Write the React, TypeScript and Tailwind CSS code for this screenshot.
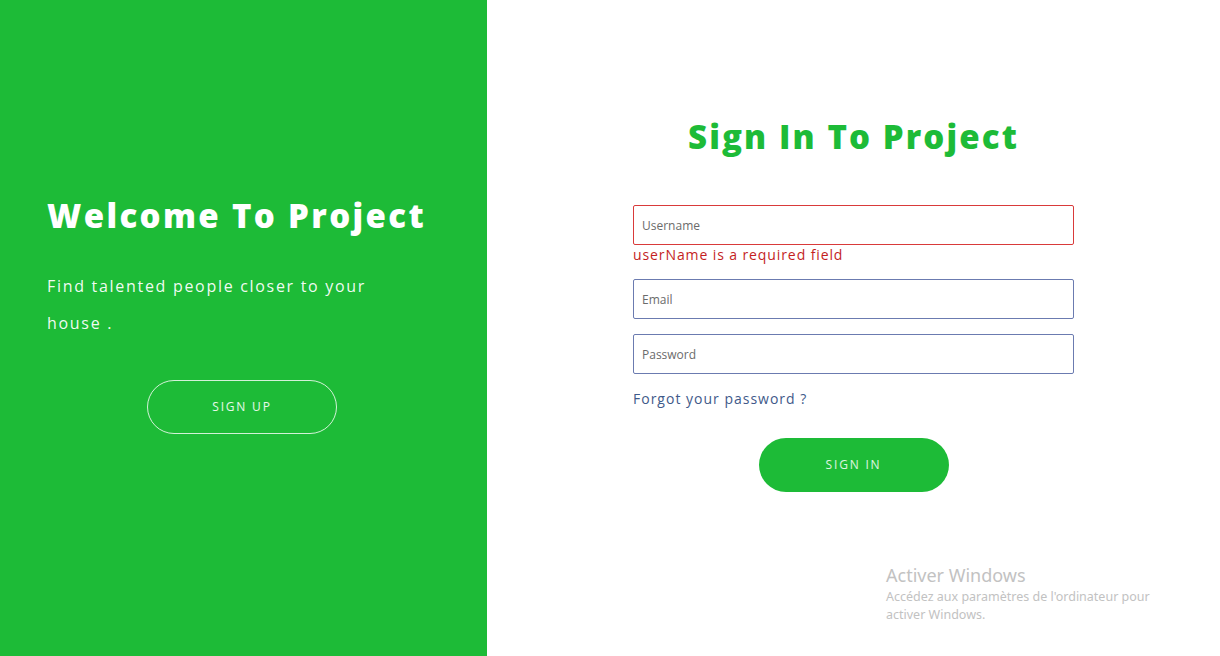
export default function App() {
  return (
    <div className="relative flex h-[656px] w-[1220px] overflow-hidden bg-white font-['Open_Sans',sans-serif]">
      {/* Left welcome panel */}
      <div className="flex w-[487px] flex-col bg-[#1dbb37] pl-[47px] pt-[196px] text-white">
        <h1 className="text-[33px] leading-[40px] font-extrabold tracking-[2.35px]">Welcome To Project</h1>
        <p className="mt-[32px] w-[340px] text-[16px] leading-[37px] tracking-[1.7px] text-white/95">
          Find talented people closer to your house .
        </p>
        <button className="mt-[38px] ml-[100px] h-[54px] w-[190px] rounded-full border border-white/80 text-[12px] tracking-[1.8px] text-white/90">
          SIGN UP
        </button>
      </div>

      {/* Right sign in panel */}
      <div className="flex flex-1 flex-col items-center pt-[117px]">
        <h2 className="text-[33px] leading-[40px] font-extrabold tracking-[2.1px] text-[#1dbb37]">Sign In To Project</h2>
        <form className="mt-[48px] flex w-[441px] flex-col">
          <input
            placeholder="Username"
            className="h-[40px] w-full rounded-[2px] border border-[#d93a3a] px-2 text-[12px] text-gray-700 placeholder-[#6b6b6b] outline-none"
          />
          <span className="mt-[1px] text-[14px] leading-[18px] tracking-[0.9px] text-[#c41e1e]">userName is a required field</span>
          <input
            placeholder="Email"
            className="mt-[15px] h-[40px] w-full rounded-[2px] border border-[#6b7bb0] px-2 text-[12px] text-gray-700 placeholder-[#6b6b6b] outline-none"
          />
          <input
            placeholder="Password"
            className="mt-[15px] h-[40px] w-full rounded-[2px] border border-[#6b7bb0] px-2 text-[12px] text-gray-700 placeholder-[#6b6b6b] outline-none"
          />
          <a className="mt-[15px] text-[14px] leading-[20px] tracking-[1px] text-[#3f5a8a]">Forgot your password ?</a>
          <button
            type="button"
            className="mt-[29px] h-[54px] w-[190px] self-center rounded-full bg-[#1dbb37] text-[12px] tracking-[1.8px] text-white/85"
          >
            SIGN IN
          </button>
        </form>
      </div>

      {/* Windows activation watermark */}
      <div className="pointer-events-none absolute left-[886px] top-[563px] font-['Noto_Sans',sans-serif] text-[#c2c2c2]">
        <div className="text-[18px] leading-[24px]">Activer Windows</div>
        <div className="mt-[1px] w-[300px] text-[12.5px] leading-[18px]">
          Accédez aux paramètres de l'ordinateur pour activer Windows.
        </div>
      </div>
    </div>
  );
}
